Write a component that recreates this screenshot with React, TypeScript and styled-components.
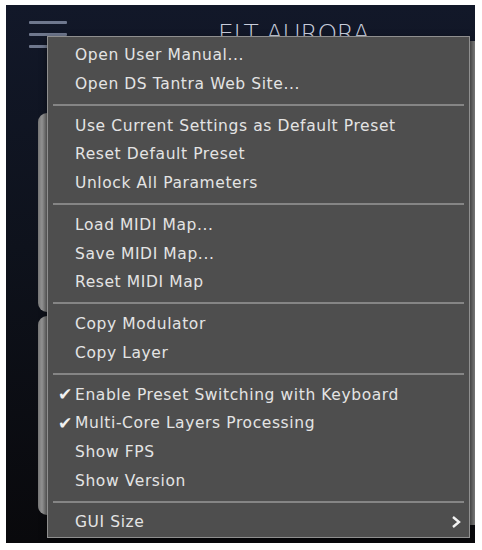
import styled, { createGlobalStyle } from "styled-components";

const GlobalStyle = createGlobalStyle`
  html, body {
    margin: 0;
    padding: 0;
    background: #ffffff;
  }
  body {
    font-family: "DejaVu Sans", "Liberation Sans", sans-serif;
  }
`;

type MenuEntry =
  | { kind: "item"; label: string; checked?: boolean; submenu?: boolean }
  | { kind: "separator" };

const entries: MenuEntry[] = [
  { kind: "item", label: "Open User Manual..." },
  { kind: "item", label: "Open DS Tantra Web Site..." },
  { kind: "separator" },
  { kind: "item", label: "Use Current Settings as Default Preset" },
  { kind: "item", label: "Reset Default Preset" },
  { kind: "item", label: "Unlock All Parameters" },
  { kind: "separator" },
  { kind: "item", label: "Load MIDI Map..." },
  { kind: "item", label: "Save MIDI Map..." },
  { kind: "item", label: "Reset MIDI Map" },
  { kind: "separator" },
  { kind: "item", label: "Copy Modulator" },
  { kind: "item", label: "Copy Layer" },
  { kind: "separator" },
  { kind: "item", label: "Enable Preset Switching with Keyboard", checked: true },
  { kind: "item", label: "Multi-Core Layers Processing", checked: true },
  { kind: "item", label: "Show FPS" },
  { kind: "item", label: "Show Version" },
  { kind: "separator" },
  { kind: "item", label: "GUI Size", submenu: true },
];

export default function App(): JSX.Element {
  return (
    <>
      <GlobalStyle />
      <Frame>
        <Header>
          <Hamburger>
            <span />
            <span />
            <span />
          </Hamburger>
          <Title>ELT AURORA</Title>
        </Header>
        <Body>
          <PanelColumn>
            <Panel />
            <Panel />
          </PanelColumn>
          <SideStrip />
        </Body>

        <Menu>
          {entries.map((entry, i) =>
            entry.kind === "separator" ? (
              <Separator key={i} />
            ) : (
              <Item key={i}>
                <Check>{entry.checked ? "✔" : ""}</Check>
                <Label>{entry.label}</Label>
                {entry.submenu && (
                  <Chevron
                    xmlns="http://www.w3.org/2000/svg"
                    width="10"
                    height="14"
                    viewBox="0 0 10 14"
                  >
                    <polyline
                      points="2,2 8,7 2,12"
                      fill="none"
                      stroke="#f2f2f2"
                      strokeWidth="2.4"
                    />
                  </Chevron>
                )}
              </Item>
            )
          )}
        </Menu>
      </Frame>
    </>
  );
}

const Frame = styled.div`
  position: relative;
  margin: 5px 7px 0 6px;
  width: 469px;
  height: 538px;
  display: flex;
  flex-direction: column;
  background: linear-gradient(#121829 0%, #0e121c 45%, #09090c 100%);
  overflow: hidden;
`;

const Header = styled.div`
  height: 50px;
  display: flex;
  align-items: flex-start;
  padding: 16px 0 0 23px;
  box-sizing: border-box;
`;

const Hamburger = styled.div`
  width: 38px;
  display: flex;
  flex-direction: column;
  gap: 9px;

  span {
    display: block;
    height: 3px;
    background: #6f788e;
    border-radius: 1px;
  }
`;

const Title = styled.div`
  margin: 0 0 0 151px;
  font-family: "DejaVu Sans", sans-serif;
  font-weight: 200;
  font-size: 25px;
  letter-spacing: -0.4px;
  color: #c8cddb;
  line-height: 1;
  padding-top: 0;
`;

const Body = styled.div`
  flex: 1;
  display: flex;
  padding: 58px 0 28px 32px;
`;

const PanelColumn = styled.div`
  flex: 1;
  display: flex;
  flex-direction: column;
  gap: 4px;
`;

const Panel = styled.div`
  flex: 1;
  border-radius: 9px 0 0 9px;
  background: linear-gradient(90deg, #757575 0px, #959595 4px, #686868 9px);
`;

const SideStrip = styled.div`
  width: 6px;
  margin: -72px 0 -10px 0;
  background: linear-gradient(90deg, #565656, #7a7a7a);
`;

const Menu = styled.div`
  position: absolute;
  left: 41px;
  top: 31px;
  width: 423px;
  box-sizing: border-box;
  padding: 4px 0 0 0;
  background: #4e4e4e;
  border: 1.5px solid #8f8f8f;
  font-family: "DejaVu Sans", "Liberation Sans", sans-serif;
  font-size: 15.5px;
  letter-spacing: 0.6px;
  color: #e4e4e4;
  box-shadow: 0 2px 6px rgba(0, 0, 0, 0.5);
`;

const Item = styled.div`
  height: 28.6px;
  display: flex;
  align-items: center;
  padding-right: 8px;
`;

const Check = styled.span`
  width: 27px;
  padding-left: 10px;
  box-sizing: border-box;
  font-size: 17px;
  line-height: 1;
  letter-spacing: 0;
  color: #f0f0f0;
`;

const Label = styled.span`
  flex: 1;
  white-space: nowrap;
`;

const Chevron = styled.svg`
  display: block;
`;

const Separator = styled.div`
  height: 2px;
  margin: 5.7px 5px;
  background: #858585;
`;
